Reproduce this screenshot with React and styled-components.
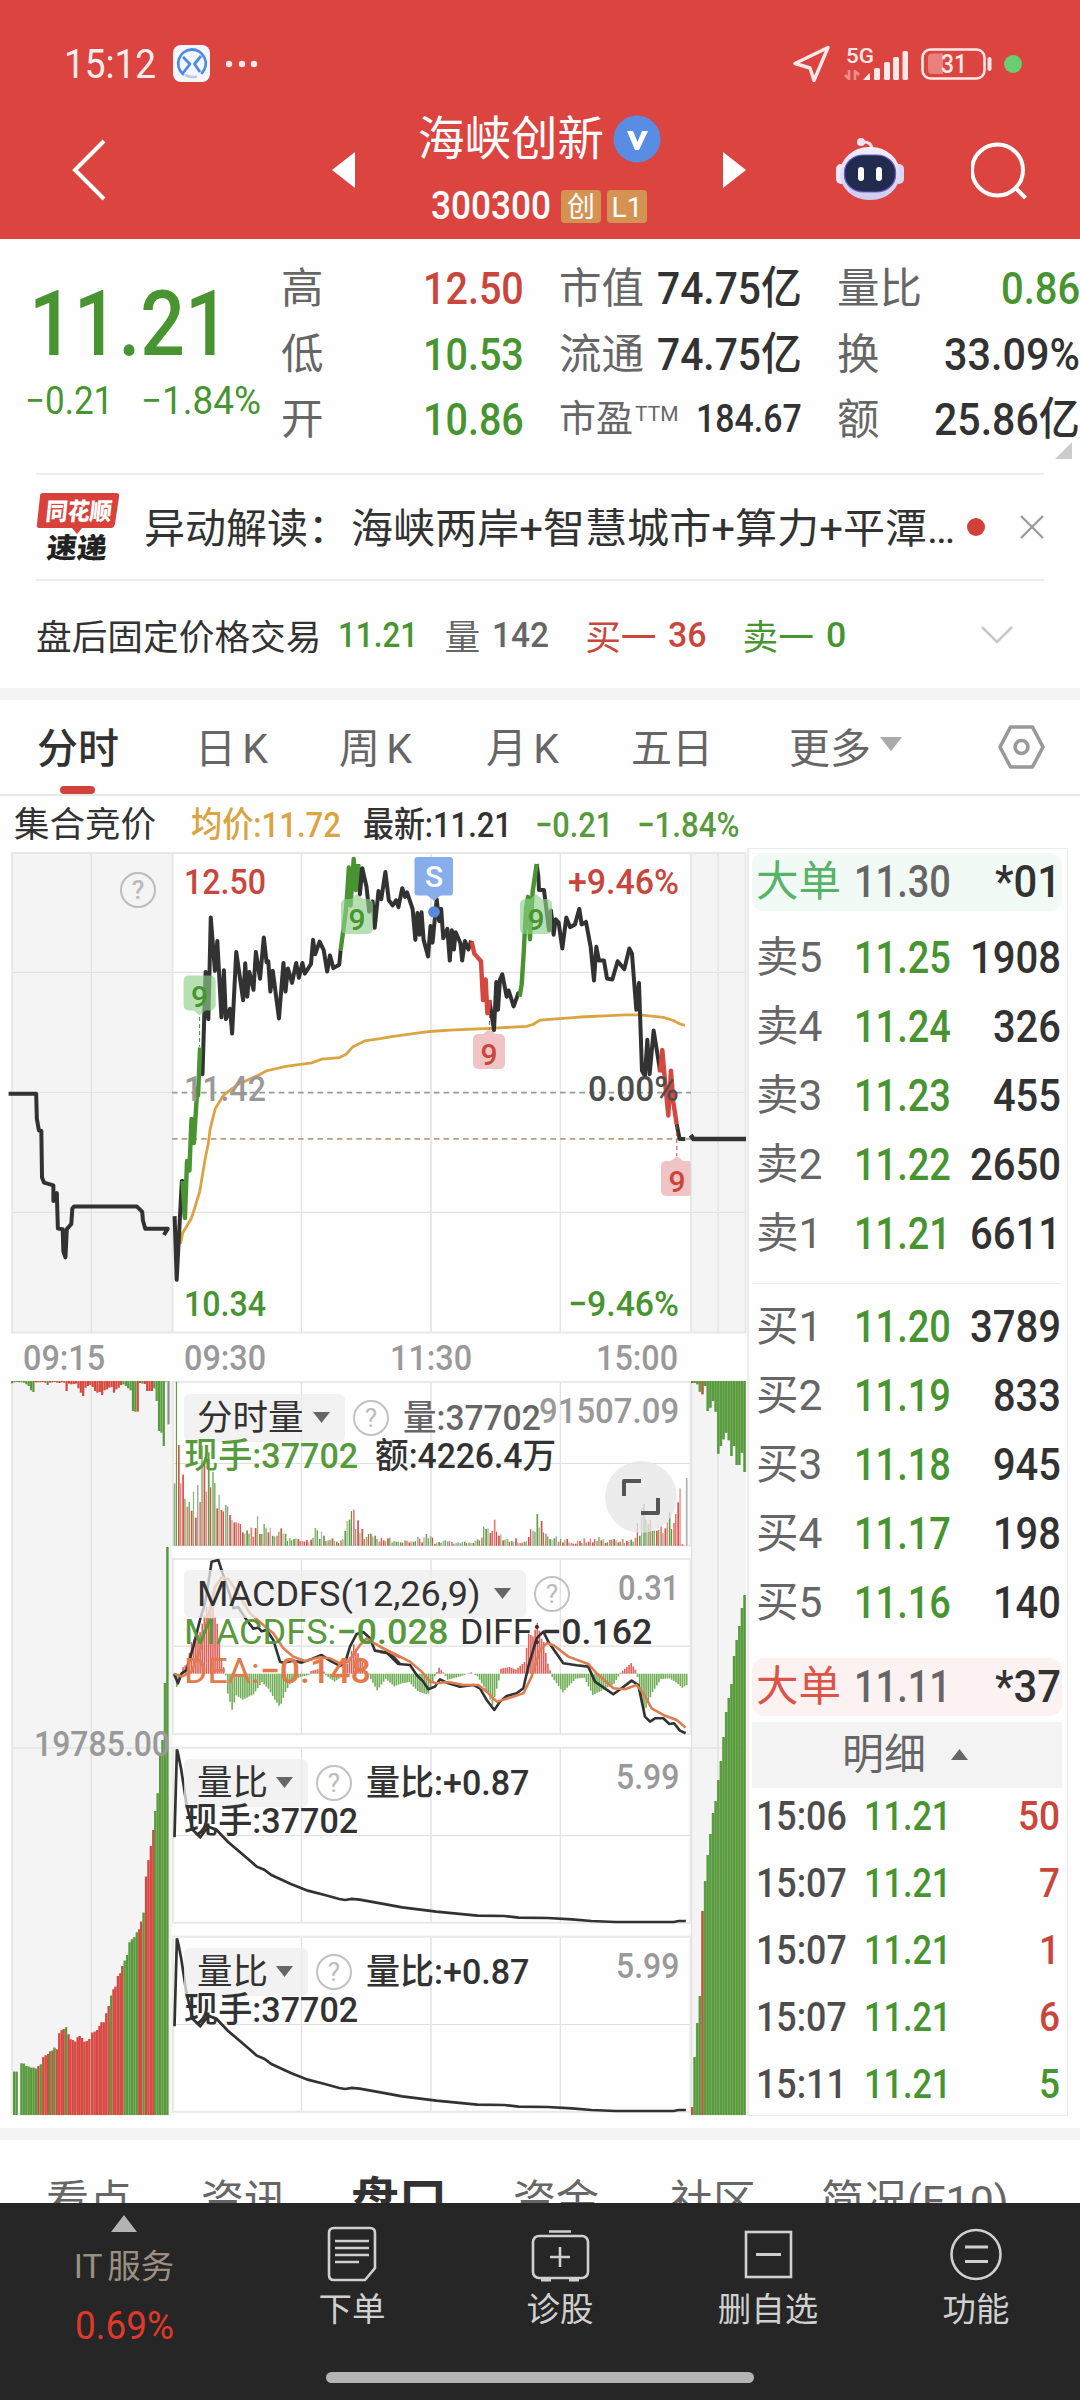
import React, { useLayoutEffect, useRef, useState } from 'react'
import styled, { createGlobalStyle } from 'styled-components'

const RED = '#c9463d'
const GREEN = '#479430'
const INK = '#323232'
const GREY = '#666'
const LIGHT = '#999'
const GOLD = '#d9a441'

// squeezes a figure into a fixed width, the way the condensed numerals are set
function Fit({ w, children, ...rest }) {
    const ref = useRef(null)
    const [scale, setScale] = useState(1)
    useLayoutEffect(() => {
        setScale(w / ref.current.offsetWidth)
    }, [w, children])
    return (
        <FitBox $w={w} {...rest}>
            <FitText ref={ref} style={{ transform: `scaleX(${scale})` }}>{children}</FitText>
        </FitBox>
    )
}

const tri = (dir) => dir === 'up' ? '0,10 8.5,0 17,10' : '0,0 17,0 8.5,10'

function Caret({ dir, color = GREY, size = 17, ...rest }) {
    return (
        <svg width={size} height={size * 0.65} viewBox="0 0 17 10" preserveAspectRatio="none" {...rest}>
            <polygon points={tri(dir)} fill={color} />
        </svg>
    )
}

function Help() {
    return <HelpCircle>?</HelpCircle>
}

/* ---------- data ---------- */

const asks = [['卖5', '11.25', '1908'], ['卖4', '11.24', '326'], ['卖3', '11.23', '455'], ['卖2', '11.22', '2650'], ['卖1', '11.21', '6611']]
const bids = [['买1', '11.20', '3789'], ['买2', '11.19', '833'], ['买3', '11.18', '945'], ['买4', '11.17', '198'], ['买5', '11.16', '140']]
const ticks = [['15:06', '50', RED], ['15:07', '7', RED], ['15:07', '1', RED], ['15:07', '6', RED], ['15:11', '5', GREEN]]

// [minute, value] pairs, filled in between
function fill(keys) {
    const out = []
    for (let k = 0; k < keys.length - 1; k++) {
        const [a, va] = keys[k]
        const [b, vb] = keys[k + 1]
        for (let i = a; i < b; i++) out.push(va + (vb - va) * (i - a) / (b - a))
    }
    out.push(keys[keys.length - 1][1])
    return out
}

const volHead = [187, 492, 302, 187, 213, 141, 117, 131, 105, 162, 84, 182, 131, 300, 250, 162, 280, 175, 221, 188, 112, 153, 107, 103, 122, 118, 92, 77, 70, 70, 68, 65, 40, 36, 46, 36, 54, 27, 53, 88, 35, 35, 65, 52, 40, 54, 30, 28, 30, 42, 52, 36, 36, 14, 22, 16, 20, 22, 20, 14, 14, 12, 17, 12, 18, 24, 53, 46, 20, 42, 30, 14, 16, 18, 22, 14, 12, 8, 16, 20, 44, 74, 78, 104, 108, 50, 76, 38, 50, 20, 26, 35, 36, 28, 30, 20, 12, 24, 16, 14, 22, 24, 10, 14, 12, 12]
const volMid = fill([[106, 10], [108, 16], [112, 12], [114, 27], [116, 14], [118, 35], [119, 32], [121, 24], [122, 8], [128, 18], [131, 8], [136, 12], [139, 8], [143, 22], [144, 24]])
    .map((v, i) => v * (i % 3 === 1 ? 0.7 : 1))
const volTail = [57, 50, 52, 38, 44, 78, 42, 30, 34, 16, 18, 20, 12, 14, 12, 22, 10, 8, 9, 12, 14, 26, 50, 45, 42, 95, 54, 74, 40, 36, 28, 20, 18, 22, 28, 12, 20, 10, 18, 20, 10, 8, 6, 6, 15, 14, 8, 22, 10, 12, 22, 10, 20, 14, 26, 16, 20, 9, 10, 18, 18, 20, 16, 10, 12, 20, 8, 14, 11, 18, 12, 24, 67, 30, 112, 125, 78, 65, 78, 44, 46, 45, 48, 58, 38, 52, 70, 100, 50, 68, 95, 130, 172, 4, 0, 203]
const volume = [...volHead, ...volMid, ...volTail]
const volTone = 'ggrrrgrgrgrxrgrrgrggrgrrgxrgrrr'

const macd = fill([[0, -8], [1, -40], [3, -10], [4, 20], [6, 30], [8, 95], [10, 110], [12, 125], [15, 200], [16, 180], [18, 235], [19, 170], [20, 150], [21, 90], [22, 45], [23, 20], [24, -5], [25, -60], [27, -108], [29, -65], [32, -78], [37, -62], [41, -25], [44, -45], [47, -78], [49, -96], [50, -90], [52, -55], [55, -20], [60, -8], [63, -4], [64, 8], [69, 17], [71, -5], [75, -24], [79, -6], [80, 10], [84, 88], [87, 48], [90, 8], [91, -5], [95, -50], [99, -15], [103, -38], [106, -30], [110, -25], [114, -52], [118, -62], [119, -60], [122, -8], [123, 5], [124, 18], [126, 4], [128, -18], [134, -8], [139, 4], [142, -8], [147, -60], [149, -95], [152, -20], [153, 15], [157, 20], [160, 12], [164, 35], [166, 120], [168, 112], [170, 152], [172, 105], [173, 95], [175, 30], [177, -10], [182, -56], [188, -15], [192, -12], [196, -64], [201, -48], [206, -30], [209, 3], [214, 32], [216, 12], [217, -10], [220, -118], [224, -55], [228, -16], [232, -14], [235, -26], [238, -42], [240, -34]])

const preTop = '7 4 3 4 4 5 10 15 28 33 4 4 4 3 5 12 5 4 3 5 6 4 5 30 8 10 9 8 22 35 45 20 15 12 18 30 35 33 42 28 25 20 18 35 25 20 12 10 15 22 28 90 92 92 6 8 9 30 30 30 22 60 150 155 195 2 130'.split(' ').map(Number)
const preTopTone = 'ggggggggggrrrrrgrrrgrrrrrrrrrrrrrrrrrrrrrrrrrrrggggggrrgrrrrgggggg'
const preBars = [[27, 1025, 'g'], [32, 1025, 'g'], [42, 1000, 'g'], [47, 1001, 'g'], [52, 1008, 'g'], [57, 1010, 'g'], [62, 1013, 'g'], [67, 1013, 'g'], [72, 1016, 'g'], [77, 1008, 'r'], [82, 1003, 'g'], [87, 982, 'r'], [92, 976, 'r'], [97, 972, 'r'], [101, 964, 'g'], [106, 962, 'r'], [110, 953, 'g'], [115, 958, 'r'], [120, 910, 'r'], [125, 901, 'r'], [129, 897, 'r'], [134, 892, 'g'], [139, 913, 'r'], [143, 928, 'r'], [148, 930, 'r'], [153, 935, 'r'], [158, 922, 'r'], [162, 918, 'r'], [167, 924, 'r'], [172, 935, 'r'], [177, 933, 'r'], [182, 927, 'r'], [188, 908, 'r'], [193, 905, 'r'], [198, 900, 'r'], [203, 888, 'r'], [207, 877, 'r'], [212, 877, 'r'], [217, 850, 'r'], [222, 828, 'r'], [227, 797, 'g'], [232, 778, 'r'], [236, 770, 'r'], [241, 738, 'r'], [246, 730, 'r'], [250, 708, 'r'], [255, 692, 'g'], [260, 675, 'g'], [265, 637, 'g'], [270, 628, 'g'], [275, 621, 'g'], [280, 607, 'g'], [285, 598, 'r'], [289, 575, 'r'], [294, 548, 'g'], [299, 440, 'r'], [304, 390, 'r'], [309, 348, 'r'], [314, 300, 'r'], [318, 243, 'g'], [323, 190, 'g'], [328, 75, 'g'], [333, 30, 'g'], [338, -141, 'g'], [343, -549, 'g']]
const postTop = [6, 6, 10, 32, 40, 15, 90, 80, 60, 92, 218, 195, 175, 155, 178, 225, 195, 252, 252, 215, 273]
const postBars = [2107, 2057, 2023, 1996, 1911, 1881, 1855, 1834, 1813, 1801, 1780, 1761, 1737, 1712, 1698, 1684, 1656, 1640, 1626, 1608, 1595]

const tone = (c) => c === 'g' ? '#579a3c' : c === 'r' ? '#d6473f' : '#909090'

/* ---------- charts ---------- */

// left and right halves of the trace are kept on their own grids
const L = 'translate(0 840) scale(.3444)'
const R = 'translate(380 840) scale(.3333 .3444)'

function Trace({ grid, points, color = INK, width = 4 }) {
    return (
        <g transform={grid}>
            <polyline points={points} fill="none" stroke={color} strokeWidth={width} strokeLinejoin="round" strokeLinecap="butt" vectorEffect="non-scaling-stroke" />
        </g>
    )
}

function Nine({ x, y, down, up }) {
    const fillColor = down ? '#e8a5a5' : '#8fcf8b'
    return (
        <g>
            <path d={up ? `M${x - 6} ${y}l6 -5 6 5z` : `M${x - 6} ${y + 35}l6 5 6 -5z`} fill={fillColor} opacity=".65" />
            <rect x={x - 16} y={y} width="32" height="35" rx="5" fill={fillColor} opacity=".65" />
            <ChartText x={x} y={y + 31} fontSize="30" textAnchor="middle" fill={down ? RED : GREEN}>9</ChartText>
        </g>
    )
}

function Label({ x, y, w, color, children, size = 35.5 }) {
    return <ChartText x={x} y={y} fontSize={size} fill={color} textLength={w} lengthAdjust="spacingAndGlyphs">{children}</ChartText>
}

function PriceChart() {
    return (
        <Plot width="747" height="486" viewBox="0 848 747 486">
            <rect x="12" y="852" width="161" height="481" fill="#f4f4f4" />
            <rect x="691" y="852" width="55" height="481" fill="#f4f4f4" />
            <g stroke="#e2e2e2" strokeWidth="1.2">
                <path d="M12 972.3H746M12 1092.5H173M691 1092.5H746M12 1212.3H746M91.3 853V1332M301.5 853V1332M560.3 853V1332" />
                <path d="M11 853H746M11 1332.5H746M12 853V1332M172.5 853V1332M431 853V1332M691 853V1332M718 853V1332M745.5 853V1332" stroke="#e8e8e8" strokeWidth="2" />
            </g>
            <path d="M172 1092.6H691" stroke="#999" strokeWidth="1.8" strokeDasharray="5.6 4.1" />
            <path d="M172 1138.8H691" stroke="#b8a078" strokeWidth="1.8" strokeDasharray="5.6 4.1" />

            <Trace grid={L} width={2.8} color={GOLD} points="520,1120 525,1170 530,1142 555,1100 565,1070 580,1020 595,930 605,880 610,840 625,780 650,740 690,710 750,683 775,670 830,657 905,647 935,636 985,632 1005,622 1025,600 1060,583 1103,577" />
            <Trace grid={R} width={2.8} color={GOLD} points="0,577 40,570 150,556 210,552 330,547 440,541 460,535 480,523 600,514 690,510 735,508 780,508 850,515 880,524 897,533 915,538" />

            <Trace grid={L} points="25,737 105,737 107,810 113,843 120,845 122,980 128,995 155,1003 155,1048 165,1025 168,1128 182,1130 184,1195 190,1212 194,1130 207,1115 210,1070 215,1064 397,1064 413,1080 415,1105 422,1129 487,1129 476,1147" />
            <Trace grid={L} points="507,1092 513,1277 528,990 530,990 537,1095" />
            <Trace grid={L} points="581,605 588,680 597,383 605,520 612,225 624,380 631,293 643,515 650,378 656,520 668,490 674,562 686,325 706,465 712,358 718,455 724,383 736,435 743,325 755,403 766,283 774,355 779,352 785,440 792,380 810,518 823,357 829,440 836,373 848,415 860,357 868,400 878,357 885,388 903,360 909,290 915,332 928,295 940,320 950,382 958,335 968,372 985,362 989,320" />
            <Trace grid={L} points="1040,70 1045,158 1052,82 1064,135 1072,208 1082,178 1088,255 1099,148 1107,172 1119,93 1129,175 1140,190 1150,175 1157,195 1168,140 1176,165 1182,152 1198,200 1206,290 1212,212 1218,275 1224,210 1230,290 1243,338 1250,250 1256,298 1268,172 1275,235 1281,200 1287,285 1299,258 1306,350 1312,262 1318,318 1323,268 1337,300 1342,350 1350,293 1360,318 1368,292" />
            <Trace grid={R} points="328,465 342,552 349,412 354,493 360,405 367,390 380,455 386,437 401,483 415,445 419,453" />
            <Trace grid={R} points="470,70 475,105 477,145 492,145 507,262 513,205 521,275 527,230 536,240 547,315 559,225 570,253 585,245 598,200 605,245 618,238 632,310 642,408 649,310 657,350 672,350 681,402 697,405 713,352 733,375 748,315 756,330 769,493 777,415 786,670 795,685 802,580 809,680 821,553 837,650 840,672" />
            <Trace grid={R} points="890,825 899,868 916,868" />
            <Trace grid={R} points="932,857 940,868 1098,868" width={4.6} />

            <Trace grid={L} color={GREEN} width={4.4} points="530,990 537,1098 543,932 550,960 556,810 563,880 573,720 575,742 581,603" />
            <Trace grid={L} color={GREEN} width={4.4} points="989,320 1005,200 1013,80 1018,190 1027,55 1033,145 1040,70" />
            <Trace grid={R} color={GREEN} width={4.4} points="419,455 425,420 431,330 438,200 444,165 450,288 458,150 470,70" />
            <Trace grid={R} color="#d6473f" width={4.4} points="275,295 283,330 303,352 309,465 317,405 322,503 330,465" />
            <Trace grid={R} color="#d6473f" width={4.4} points="840,675 847,610 857,720 865,800 873,670 880,760 890,825" />

            <path d="M199.6 1017V1047" stroke={GREEN} strokeDasharray="4 3" />
            <path d="M489.5 1014V1030M676.8 1125V1156" stroke={RED} strokeDasharray="4 3" />
            <Nine x={199.6} y={975.5} />
            <Nine x={357} y={899} up />
            <Nine x={536} y={899} up />
            <Nine x={489} y={1034} down up />
            <ClipRight><Nine x={677} y={1161} down up /></ClipRight>

            <rect x="414.5" y="857" width="38.5" height="38.5" rx="3" fill="#87aeeb" />
            <path d="M427 895l7 6 7 -6z" fill="#87aeeb" />
            <circle cx="434" cy="912" r="5.8" fill="#5a88da" />
            <ChartText x="434" y="887" fontSize="30" fill="#fff" textAnchor="middle">S</ChartText>

            <circle cx="138" cy="890" r="17" fill="none" stroke="#bbb" strokeWidth="2" />
            <ChartText x="138" y="899" fontSize="26" fill="#bbb" textAnchor="middle">?</ChartText>

            <Label x={184} y={894} w={82} color={RED}>12.50</Label>
            <Label x={184} y={1101} w={82} color={LIGHT}>11.42</Label>
            <Label x={184} y={1316} w={82} color={GREEN}>10.34</Label>
            <Label x={568} y={894} w={111} color={RED}>+9.46%</Label>
            <Label x={588} y={1101} w={91} color="#4d4d4d">0.00%</Label>
            <Label x={568} y={1316} w={111} color={GREEN}>−9.46%</Label>
        </Plot>
    )
}

function ClipRight({ children }) {
    return (
        <>
            <clipPath id="sessionEnd"><rect x="600" y="1100" width="90.5" height="120" /></clipPath>
            <g clipPath="url(#sessionEnd)">{children}</g>
        </>
    )
}

function PreColumn() {
    return (
        <Plot width="172" height="736" viewBox="0 1380 172 736">
            <rect x="12" y="1382" width="160" height="734" fill="#f4f4f4" />
            <path d="M12 1382V2115M91.3 1382V2115M12 1748H172" stroke="#e2e2e2" strokeWidth="1.4" />
            {preTop.map((h, i) => (
                <rect key={i} x={11 + i * 2.37} y="1381" width="2.2" height={h / 3} fill={tone(preTopTone[i])} />
            ))}
            {preBars.map(([x, y, c]) => (
                <rect key={x} x={x / 2.063} y={1730 + y / 3} width="2.1" height={385 - y / 3} fill={tone(c)} />
            ))}
            <g opacity=".5">
                {preBars.map(([x, y, c]) => (
                    <rect key={x} x={x / 2.063} y={1730 + y / 3} width="2.5" height={385 - y / 3} fill={tone(c)} />
                ))}
            </g>
            <Label x={34} y={1755.5} w={136} color={LIGHT}>19785.00</Label>
        </Plot>
    )
}

function PostColumn() {
    return (
        <Plot width="56" height="736" viewBox="691 1380 56 736">
            <rect x="691" y="1382" width="55" height="734" fill="#f4f4f4" />
            <path d="M691.5 1382V2115M718 1382V2115M691 1748H746" stroke="#e2e2e2" strokeWidth="1.4" />
            <g opacity=".72">
                <path d={postTop.map((h, i) => `M${692 + i * 2.63} 1381v${h / 3}`).join('')} stroke={tone('g')} strokeWidth="2.7" />
                <path d={postBars.map((y, i) => `M${692 + i * 2.63} 2115V${y}`).join('')} stroke={tone('g')} strokeWidth="2.7" />
            </g>
            {postTop.map((h, i) => (
                <rect key={i} x={691 + i * 2.63} y="1381" width="1.9" height={h / 3} fill={tone(i === 0 || i === 4 ? 'r' : 'g')} />
            ))}
            {postBars.map((y, i) => (
                <rect key={i} x={691 + i * 2.63} y={y} width="1.9" height={2115 - y} fill={tone(i === 0 || i === 4 ? 'r' : 'g')} />
            ))}
        </Plot>
    )
}

function Grid({ top, mid, bottom }) {
    return (
        <>
            <path d={`M172 ${mid}H691M301.5 ${top}V${bottom}M560.3 ${top}V${bottom}`} stroke="#e0e0e0" strokeWidth="1.2" />
            <path d={`M172 ${top}H691M172 ${bottom}H691M173 ${top}V${bottom}M431 ${top}V${bottom}M690.5 ${top}V${bottom}`} stroke="#e9e9e9" strokeWidth="2" />
        </>
    )
}

function VolumePanel() {
    return (
        <Panel $h={173}>
            <Plot width="519" height="173" viewBox="172 1380 519 173">
                <Grid top={1382} mid={1463.5} bottom={1545.5} />
                {volume.map((h, i) => {
                    const c = i < volTone.length ? volTone[i] : i === volume.length - 1 ? 'x' : 'rgrgggrrgxrg'[(i * 7 + Math.round(h)) % 12]
                    return <rect key={i} x={173.7 + i * 2.134} y={1545.7 - h / 3} width={i % 2 ? 1.2 : 1.7} height={h / 3} fill={tone(c)} opacity={i % 3 ? 0.95 : 0.7} />
                })}
            </Plot>
            <Legend $top={14}>
                <Tag $w={161}>分时量<Caret /></Tag>
                <Help />
                <Fit w={138}>量:37702</Fit>
            </Legend>
            <Scale $top={13}><Fit w={140}>91507.09</Fit></Scale>
            <Values $top={57}>
                <Tone $c="#579a3c"><Fit w={174}>现手:37702</Fit></Tone>
                <Tone><Fit w={181}>额:4226.4万</Fit></Tone>
            </Values>
            <Expand>
                <svg width="38" height="38" viewBox="0 0 38 38" fill="none" stroke="#555" strokeWidth="4">
                    <path d="M2 18V3H19M36 20V35H19" strokeLinejoin="round" />
                </svg>
            </Expand>
        </Panel>
    )
}

function MacdPanel() {
    const L5 = 'translate(0 1360) scale(.3333)'
    const R5 = 'translate(380 1360) scale(.3333)'
    return (
        <Panel $h={189}>
            <Plot width="519" height="189" viewBox="172 1553 519 189">
                <Grid top={1559} mid={1646.2} bottom={1734} />
                {macd.map((h, i) => (
                    <rect key={i} x={173.7 + i * 2.134} y={h > 0 ? 1673.7 - h / 3 : 1673.7} width="1.6" height={Math.abs(h) / 3} fill={h > 0 ? '#df5f5b' : '#70ad57'} />
                ))}
                <Trace grid={L5} width={2.6} points="522,941 534,970 545,940 560,930 580,860 600,780 615,730 625,670 635,605 655,600 668,640 690,705 700,745 715,742 740,780 760,806 775,803 785,814 800,810 820,840 840,905 850,908 880,902 905,908 935,897 965,885 990,902 1020,918 1035,910 1050,860 1070,822 1090,816 1110,835 1125,872 1160,878 1180,890 1200,912" />
                <Trace grid={R5} width={2.6} points="0,876 20,878 55,912 90,915 110,945 130,965 145,988 165,980 180,958 205,970 240,980 280,975 300,985 320,1020 343,1050 360,1025 380,1008 410,1000 430,985 445,920 470,835 490,815 505,845 550,910 590,916 625,920 645,965 700,1003 725,985 755,962 775,975 795,1070 810,1085 825,1075 850,1075 868,1092 882,1090 900,1112 917,1120" />
                <Trace grid={L5} width={2.6} color="#dd7d52" points="522,941 545,950 575,935 600,870 625,770 645,680 665,652 685,658 710,695 750,760 790,795 820,820 850,865 880,890 915,903 960,892 990,895 1020,910 1045,905 1080,855 1100,835 1120,848 1150,865 1200,893" />
                <Trace grid={R5} width={2.6} color="#dd7d52" points="0,860 50,885 90,905 125,935 150,965 170,970 205,966 250,975 295,975 320,995 350,1025 385,1015 430,1000 455,950 480,870 500,850 520,855 565,890 625,912 650,940 700,985 735,988 770,975 790,1000 815,1045 850,1065 890,1080 917,1103" />
            </Plot>
            <Legend $top={17}>
                <Tag $w={342}><Fit w={284}>MACDFS(12,26,9)</Fit><Caret /></Tag>
                <Help />
            </Legend>
            <Scale $top={17}><Fit w={61}>0.31</Fit></Scale>
            <Values $top={60}>
                <Tone $c="#579a3c"><Fit w={265}><Thin>MACDFS:</Thin>−0.028</Fit></Tone>
                <Tone $gap={-6}><Fit w={192}><Thin>DIFF:</Thin>−0.162</Fit></Tone>
            </Values>
            <Values $top={99}>
                <Tone $c="#e37a4c"><Fit w={187}><Thin>DEA:</Thin>−0.148</Fit></Tone>
            </Values>
        </Panel>
    )
}

function RatioPanel({ height }) {
    return (
        <Panel $h={height}>
            <Plot width="519" height={height} viewBox={`172 1742 519 ${height}`}>
                <Grid top={1747.7} mid={1835.5} bottom={1922.8} />
                <g transform="translate(0 1730) scale(.4847 .3333)">
                    <polyline points="360,322 365,58 368,75 374,120 385,225 398,300 413,322 430,290 447,300 470,335 510,385 530,410 545,419 560,435 600,462 635,482 670,495 700,507 712,510 726,507 742,509 785,520 830,532 900,545 985,557 1040,558 1070,563 1130,564 1180,568 1220,573 1270,576 1390,576 1400,573 1415,573" fill="none" stroke={INK} strokeWidth="2.7" vectorEffect="non-scaling-stroke" />
                </g>
            </Plot>
            <Legend $top={17}>
                <Tag $w={124}>量比<Caret /></Tag>
                <Help />
                <Tone><Fit w={163}>量比:+0.87</Fit></Tone>
            </Legend>
            <Scale $top={17}><Fit w={63}>5.99</Fit></Scale>
            <Values $top={60}>
                <Tone><Fit w={174}>现手:37702</Fit></Tone>
            </Values>
        </Panel>
    )
}

/* ---------- header ---------- */

function StatusBar() {
    return (
        <StatusRow>
            <Clock><Fit w={92}>15:12</Fit></Clock>
            <svg width="38" height="38" viewBox="0 0 38 38">
                <rect width="37" height="37" rx="8" fill="#f4f7fd" />
                <path d="M10 29A14 14 0 0 1 18.500 4.500A14 14 0 0 1 29 28" fill="none" stroke="#4f8be6" strokeWidth="2.8" strokeLinecap="round" />
                <path d="M12 30Q18 33 24 31.500" fill="none" stroke="#b9cbe8" strokeWidth="2.6" />
                <path d="M10 12L17 19L10 28M28 11L21.500 19L27 27" fill="none" stroke="#4f8be6" strokeWidth="2.8" strokeLinejoin="round" />
            </svg>
            <svg width="34" height="8" viewBox="0 0 34 8" fill="#fde9e8">
                <circle cx="4" cy="4" r="3.2" /><circle cx="17" cy="4" r="3.2" /><circle cx="29" cy="4" r="3.2" />
            </svg>
            <StatusRight>
                <svg width="40" height="40" viewBox="0 0 40 40" fill="none" stroke="#fde9e8" strokeWidth="3.4" strokeLinejoin="round">
                    <path d="M35 3.500L2 19.500L17 24L21 36.500z" />
                </svg>
                <svg width="66" height="36" viewBox="0 0 66 36">
                    <Status5G x="2" y="17" fontSize="21" textLength="28" lengthAdjust="spacingAndGlyphs">5G</Status5G>
                    <path d="M5 34V24M1 29L5 33M11 34V24M11 25L15 29" stroke="#ec8f8c" strokeWidth="2.6" fill="none" />
                    <g fill="#fde9e8">
                        <path d="M19 34L25 27.500Q26 27 26 28V34z" /><rect x="30" y="22" width="6" height="12" rx="1.5" />
                        <rect x="40" y="16" width="6" height="18" rx="1.5" /><rect x="49" y="11" width="6" height="23" rx="1.5" />
                        <rect x="58.500" y="5" width="5.5" height="29" rx="1.5" />
                    </g>
                </svg>
                <svg width="72" height="34" viewBox="0 0 72 34">
                    <rect x="1.5" y="2.5" width="62" height="29" rx="8" fill="none" stroke="#fde9e8" strokeWidth="2.6" />
                    <path d="M11 6.500H22V27H11a4 4 0 0 1-4-4V10.500a4 4 0 0 1 4-4z" fill="#e9807c" />
                    <path d="M68.500 12V22" stroke="#fde9e8" strokeWidth="4" strokeLinecap="round" fill="none" />
                    <Status5G x="20" y="26" fontSize="25" textLength="26" lengthAdjust="spacingAndGlyphs">31</Status5G>
                </svg>
                <GreenDot />
            </StatusRight>
        </StatusRow>
    )
}

function Robot() {
    return (
        <svg width="72" height="66" viewBox="0 0 72 66">
            <defs>
                <linearGradient id="helmet" x1="0" y1="0" x2="0" y2="1">
                    <stop offset="0" stopColor="#f3eefc" /><stop offset="1" stopColor="#cdcbf1" />
                </linearGradient>
            </defs>
            <path d="M28 5Q38 4 38 13" fill="none" stroke="#f3dfe9" strokeWidth="3" />
            <circle cx="27" cy="5" r="4" fill="#efe3f5" />
            <rect x="2" y="27" width="10" height="20" rx="5" fill="#eeebfb" />
            <rect x="60" y="27" width="10" height="20" rx="5" fill="#dcd5f5" />
            <rect x="6" y="10" width="60" height="53" rx="29" ry="27" fill="url(#helmet)" />
            <rect x="10.5" y="18" width="51" height="37" rx="19" ry="17" fill="#202b4e" stroke="#6a5bc0" strokeWidth="1.2" />
            <rect x="24" y="30" width="6" height="14" rx="3" fill="#fff" />
            <rect x="42" y="30" width="6" height="14" rx="3" fill="#fff" />
        </svg>
    )
}

function TitleBar() {
    return (
        <TitleRow>
            <BackSlot>
                <svg width="36" height="64" viewBox="0 0 36 64" fill="none" stroke="#fff" strokeWidth="4"><path d="M33 3L4 32L33 61" /></svg>
            </BackSlot>
            <svg width="24" height="36" viewBox="0 0 24 36"><path d="M0 18L23 0V36z" fill="#fff" /></svg>
            <TitleBox>
                <Name>
                    海峡创新
                    <svg width="48" height="48" viewBox="0 0 48 48">
                        <circle cx="24" cy="24" r="23.5" fill="#588de3" />
                        <path d="M14 16L22 35H26L35 16H29L24.5 27L20 16z" fill="#fff" />
                    </svg>
                </Name>
                <Code><Fit w={120}>300300</Fit><Mark>创</Mark><Mark>L1</Mark></Code>
            </TitleBox>
            <svg width="24" height="36" viewBox="0 0 24 36"><path d="M24 18L1 0V36z" fill="#fff" /></svg>
            <RobotSlot><Robot /></RobotSlot>
            <svg width="60" height="62" viewBox="0 0 60 62" fill="none" stroke="#fff" strokeWidth="4">
                <circle cx="26.5" cy="31" r="25.5" /><path d="M44.5 49L54.5 59" />
            </svg>
        </TitleRow>
    )
}

function Quote() {
    return (
        <QuoteRow>
            <PriceBox>
                <BigPrice><Fit w={201}>11.21</Fit></BigPrice>
                <Change><Fit w={88}>−0.21</Fit><Fit w={120}>−1.84%</Fit></Change>
            </PriceBox>
            <StatCol $w={243} $ml={0}>
                <Stat>高<Tone $c={RED}><Fit w={101}>12.50</Fit></Tone></Stat>
                <Stat>低<Tone $c={GREEN}><Fit w={101}>10.53</Fit></Tone></Stat>
                <Stat>开<Tone $c={GREEN}><Fit w={101}>10.86</Fit></Tone></Stat>
            </StatCol>
            <StatCol $w={243} $ml={35}>
                <Stat>市值<Tone><Fit w={145}>74.75亿</Fit></Tone></Stat>
                <Stat>流通<Tone><Fit w={145}>74.75亿</Fit></Tone></Stat>
                <Stat $small><span>市盈<Sup>TTM</Sup></span><Tone><Fit w={106}>184.67</Fit></Tone></Stat>
            </StatCol>
            <StatCol $w={243} $ml={35}>
                <Stat>量比<Tone $c={GREEN}><Fit w={79}>0.86</Fit></Tone></Stat>
                <Stat>换<Tone><Fit w={136}>33.09%</Fit></Tone></Stat>
                <Stat>额<Tone><Fit w={146}>25.86亿</Fit></Tone></Stat>
            </StatCol>
            <Corner />
        </QuoteRow>
    )
}

function Logo() {
    return (
        <svg width="86" height="72" viewBox="0 0 86 72">
            <path d="M7 2H80Q84 2 83 6L79 33Q78 37 75 37H46L41 43L36 37H4Q0 37 1 33L4 5Q4 2 7 2z" fill="#d8423a" />
            <g transform="skewX(-6)">
                <LogoText x="12" y="29" fontSize="24" textLength="66" lengthAdjust="spacingAndGlyphs" fill="#fff">同花顺</LogoText>
                <LogoText x="17" y="67" fontSize="28" textLength="60" lengthAdjust="spacingAndGlyphs" fill="#222">速递</LogoText>
            </g>
        </svg>
    )
}

/* ---------- page ---------- */

function OrderBook() {
    return (
        <Book>
            <BigOrder $bg="#f2faf5"><BookName $c="#57b368">大单</BookName><BookPrice $c={GREY}><Fit w={97}>11.30</Fit></BookPrice><Fit w={66}>*01</Fit></BigOrder>
            <BookGroup>
                {asks.map(([n, p, v]) => <Level key={n} name={n} price={p} vol={v} />)}
            </BookGroup>
            <Rule />
            <BookGroup $bids>
                {bids.map(([n, p, v]) => <Level key={n} name={n} price={p} vol={v} />)}
            </BookGroup>
            <BigOrder $bg="#fdf2f2"><BookName $c="#dc5448">大单</BookName><BookPrice $c={GREY}><Fit w={97}>11.11</Fit></BookPrice><Fit w={66}>*37</Fit></BigOrder>
            <DetailHead>明细<Caret dir="up" /></DetailHead>
            {ticks.map(([t, v, c], i) => (
                <Tick key={i}>
                    <Tone $c="#4d4d4d"><Fit w={91}>{t}</Fit></Tone>
                    <TickPrice><Fit w={87}>11.21</Fit></TickPrice>
                    <Tone $c={c}><Fit w={v.length * 21}>{v}</Fit></Tone>
                </Tick>
            ))}
        </Book>
    )
}

function Level({ name, price, vol }) {
    return (
        <LevelRow>
            <BookName>{name}</BookName>
            <BookPrice><Fit w={97}>{price}</Fit></BookPrice>
            <Fit w={vol.length * 22.7}>{vol}</Fit>
        </LevelRow>
    )
}

function App() {
    return (
        <Page>
            <Global />
            <Header>
                <StatusBar />
                <TitleBar />
            </Header>
            <Quote />
            <News>
                <Logo />
                <NewsText>异动解读：<Fit w={604}>海峡两岸+智慧城市+算力+平潭…</Fit></NewsText>
                <RedDot />
                <svg width="24" height="24" viewBox="0 0 24 24" stroke="#999" strokeWidth="2.2"><path d="M1 1L23 23M23 1L1 23" /></svg>
            </News>
            <After>
                盘后固定价格交易
                <AfterItem $c={GREEN} $ml={16}><Fit w={80}>11.21</Fit></AfterItem>
                <AfterItem $c={GREY} $ml={27}>量</AfterItem>
                <AfterItem $c={GREY} $ml={12}><Fit w={57}>142</Fit></AfterItem>
                <AfterItem $c={RED} $ml={36}>买一</AfterItem>
                <AfterItem $c={RED} $ml={11}><Fit w={39}>36</Fit></AfterItem>
                <AfterItem $c={GREEN} $ml={36}>卖一</AfterItem>
                <AfterItem $c={GREEN} $ml={12}><Fit w={20}>0</Fit></AfterItem>
                <AfterArrow width="34" height="20" viewBox="0 0 34 20"><path d="M2 2L17 17L32 2" fill="none" stroke="#c8c8c8" strokeWidth="2.6" /></AfterArrow>
            </After>
            <Band />
            <Tabs>
                <Tab $on $w={158}>分时</Tab>
                <Tab $w={144}>日 K</Tab>
                <Tab $w={147}>周 K</Tab>
                <Tab $w={145}>月 K</Tab>
                <Tab $w={158}>五日</Tab>
                <Tab $w={209}>更多<Caret color="#aaa" size={22} /></Tab>
                <svg width="47" height="46" viewBox="0 0 47 46" fill="none" stroke="#999" strokeWidth="3.6" strokeLinejoin="round">
                    <path d="M12.5 3H34.5L45 23L34.5 43H12.5L2 23z" /><circle cx="23.5" cy="23" r="6.5" />
                </svg>
            </Tabs>
            <Info>
                <AfterItem $c={INK} $ml={0}>集合竞价</AfterItem>
                <AfterItem $c={GOLD} $ml={35}><Fit w={150}>均价:11.72</Fit></AfterItem>
                <AfterItem $c={INK} $ml={22}><Fit w={149}>最新:11.21</Fit></AfterItem>
                <AfterItem $c="#579a3c" $ml={23}><Fit w={78}>−0.21</Fit></AfterItem>
                <AfterItem $c="#579a3c" $ml={24}><Fit w={103}>−1.84%</Fit></AfterItem>
            </Info>
            <Main>
                <ChartColumn>
                    <PriceChart />
                    <Axis>
                        <Fit w={82}>09:15</Fit><Fit w={82}>09:30</Fit><Fit w={82}>11:30</Fit><Fit w={82}>15:00</Fit>
                    </Axis>
                    <Lower>
                        <PreColumn />
                        <Stack>
                            <VolumePanel />
                            <MacdPanel />
                            <RatioPanel height={189} />
                            <RatioPanel height={185} />
                        </Stack>
                        <PostColumn />
                    </Lower>
                </ChartColumn>
                <OrderBook />
            </Main>
            <Band />
            <Sections>
                <Section $w={155}>看点</Section>
                <Section $w={150}>资讯</Section>
                <Section $w={162} $on>盘口</Section>
                <Section $w={157}>资金</Section>
                <Section $w={151}>社区</Section>
                <Section>简况<Fit w={102}>(F10)</Fit></Section>
            </Sections>
            <Dock>
                <Sector>
                    <Caret dir="up" color="#b3b3b3" size={26} />
                    <SectorName>IT 服务</SectorName>
                    <SectorPct><Fit w={99}>0.69%</Fit></SectorPct>
                </Sector>
                <Action>
                    <svg width="60" height="60" viewBox="0 0 60 60" fill="none" stroke="#d0d0d0" strokeWidth="2.6">
                        <path d="M12 4H48Q53 4 53 9V44L43 56H12Q7 56 7 51V9Q7 4 12 4zM13 17H47M13 24H47M13 31H47M13 38H37" />
                    </svg>
                    下单
                </Action>
                <Action>
                    <svg width="60" height="60" viewBox="0 0 60 60" fill="none" stroke="#d0d0d0" strokeWidth="2.6">
                        <rect x="3" y="12" width="55" height="42" rx="6" /><path d="M19 7.5H41M30 23V43M20 33H40" />
                        <path d="M11 56H21M39 56H49" strokeWidth="3" />
                    </svg>
                    诊股
                </Action>
                <Action>
                    <svg width="60" height="60" viewBox="0 0 60 60" fill="none" stroke="#d0d0d0" strokeWidth="2.6">
                        <rect x="8" y="8" width="45" height="45" /><path d="M18 30.5H43" strokeWidth="3" />
                    </svg>
                    删自选
                </Action>
                <Action>
                    <svg width="60" height="60" viewBox="0 0 60 60" fill="none" stroke="#d0d0d0" strokeWidth="2.6">
                        <circle cx="30" cy="30.5" r="24.5" /><path d="M19 23H42M19 37.5H42" strokeWidth="3" />
                    </svg>
                    功能
                </Action>
                <HomeBar />
            </Dock>
        </Page>
    )
}

const Global = createGlobalStyle`
    body {
        margin: 0;
        background: #fff;
    }
    svg {
        display: block;
        flex: none;
    }
`

const Page = styled.div`
    width: 1080px;
    height: 2400px;
    display: flex;
    flex-direction: column;
    overflow: hidden;
    background: #fefefe;
    color: ${INK};
    font-family: Roboto, "Noto Sans CJK SC", sans-serif;
    white-space: nowrap;
`

const FitBox = styled.div`
    width: ${p => p.$w}px;
    flex: none;
    display: inline-block;
`

const FitText = styled.span`
    display: inline-block;
    transform-origin: 0 50%;
    white-space: nowrap;
`

const Tone = styled.div`
    color: ${p => p.$c || INK};
    margin-left: ${p => p.$gap || 0}px;
`

const Thin = styled.span`
    font-weight: 400;
`

const ChartText = styled.text`
    font-family: Roboto, "Noto Sans CJK SC", sans-serif;
    font-weight: 500;
`

const Status5G = styled.text`
    font-family: Roboto, sans-serif;
    font-weight: 500;
    fill: #fde9e8;
`

const LogoText = styled.text`
    font-family: "Noto Sans CJK SC", sans-serif;
    font-weight: 900;
`

const Plot = styled.svg`
    display: block;
`

const Header = styled.header`
    height: 239px;
    background: #dc4440;
    color: #fff;
    flex: none;
`

const StatusRow = styled.div`
    display: flex;
    align-items: center;
    height: 100px;
    padding: 28px 58px 0 64px;
    box-sizing: border-box;
`

const Clock = styled.div`
    font-size: 41px;
    color: #fdeeed;
    margin-right: 17px;

    & + svg {
        margin-right: 14px;
    }
`

const StatusRight = styled.div`
    margin-left: auto;
    display: flex;
    align-items: center;
    gap: 11px;
`

const GreenDot = styled.span`
    width: 18px;
    height: 18px;
    border-radius: 50%;
    background: #6ace70;
`

const TitleRow = styled.div`
    display: flex;
    align-items: center;
    height: 139px;
    padding-left: 71px;
`

const BackSlot = styled.div`
    width: 261px;
`

const TitleBox = styled.div`
    width: 366px;
    display: flex;
    flex-direction: column;
    align-items: center;
`

const Name = styled.div`
    display: flex;
    align-items: center;
    gap: 9px;
    height: 62px;
    line-height: 62px;
    font-size: 46.5px;
    margin-top: 3px;
    padding-left: 1px;
`

const Code = styled.div`
    display: flex;
    align-items: center;
    gap: 6px;
    height: 64px;
    line-height: 64px;
    font-size: 39px;
    font-weight: 500;
    margin: 4px 0 -4px;
`

const Mark = styled.span`
    min-width: 40px;
    height: 33px;
    line-height: 35px;
    border-radius: 4px;
    background: #d49353;
    font-size: 28px;
    font-weight: 400;
    text-align: center;
    margin-left: ${p => p.children === '创' ? 4 : 0}px;
`

const RobotSlot = styled.div`
    margin: 0 65px 0 88px;
`

const QuoteRow = styled.section`
    position: relative;
    display: flex;
    height: 234px;
    padding-top: 17px;
    box-sizing: border-box;
    flex: none;
`

const PriceBox = styled.div`
    width: 281px;
    color: ${GREEN};
`

const BigPrice = styled.div`
    padding-left: 29px;
    font-size: 90px;
    font-weight: 500;
    line-height: 110px;
    height: 110px;
    margin-top: 14px;
`

const Change = styled.div`
    display: flex;
    gap: 28px;
    padding-left: 25px;
    font-size: 39px;
    line-height: 42px;
`

const StatCol = styled.div`
    width: ${p => p.$w}px;
    margin-left: ${p => p.$ml}px;
`

const Stat = styled.div`
    display: flex;
    justify-content: space-between;
    height: 65.5px;
    line-height: 65.5px;
    font-size: ${p => p.$small ? 37 : 42.5}px;
    color: ${GREY};

    ${Tone} {
        font-size: ${p => p.$small ? 39 : 45}px;
        font-weight: 500;
    }
`

const Sup = styled.sup`
    font-size: 21px;
    vertical-align: 11px;
    line-height: 0;
    margin-left: 2px;
`

const Corner = styled.i`
    position: absolute;
    right: 8px;
    bottom: 14px;
    border-left: 17px solid transparent;
    border-bottom: 17px solid #ccc;
`

const News = styled.section`
    display: flex;
    align-items: center;
    height: 108px;
    margin: 0 36px;
    border-top: 2px solid #ececec;
    border-bottom: 2px solid #ececec;
    box-sizing: border-box;
    flex: none;
`

const NewsText = styled.div`
    display: flex;
    margin-left: 22px;
    padding-bottom: 5px;
    font-size: 41px;
    width: 824px;

    & > div {
        margin-left: 2px;
    }
`

const RedDot = styled.span`
    width: 18px;
    height: 18px;
    border-radius: 50%;
    background: #cf4138;
    margin-right: 35px;
    flex: none;
`

const After = styled.section`
    display: flex;
    align-items: center;
    height: 107px;
    padding-left: 36px;
    font-size: 35.7px;
    flex: none;
`

const AfterItem = styled.div`
    color: ${p => p.$c};
    margin-left: ${p => p.$ml}px;

    ${FitText} {
        font-weight: 500;
    }
`

const AfterArrow = styled.svg`
    margin-left: auto;
    margin-right: 66px;
`

const Band = styled.div`
    height: 12px;
    background: #f4f4f4;
    flex: none;
`

const Tabs = styled.nav`
    display: flex;
    align-items: center;
    height: 96px;
    padding-left: 37px;
    border-bottom: 2px solid #e6e6e6;
    box-sizing: border-box;
    flex: none;
`

const Tab = styled.div`
    width: ${p => p.$w}px;
    display: flex;
    align-items: center;
    gap: 9px;
    height: 94px;
    padding-bottom: 5px;
    box-sizing: border-box;
    font-size: 41px;
    word-spacing: -4px;
    color: ${p => p.$on ? INK : GREY};
    font-weight: ${p => p.$on ? 500 : 400};
    position: relative;

    &::after {
        content: '';
        display: ${p => p.$on ? 'block' : 'none'};
        position: absolute;
        left: 23px;
        bottom: 0;
        width: 35px;
        height: 8px;
        border-radius: 4px;
        background: #d0423a;
    }
`

const Info = styled.div`
    display: flex;
    align-items: center;
    height: 52px;
    padding: 7px 0 0 14px;
    box-sizing: border-box;
    font-size: 35.5px;
    line-height: 45px;
    flex: none;
`

const Main = styled.main`
    display: flex;
    height: 1280px;
    flex: none;
`

const ChartColumn = styled.div`
    width: 747px;
`

const Axis = styled.div`
    display: flex;
    height: 46px;
    line-height: 48px;
    font-size: 35.5px;
    font-weight: 500;
    color: ${LIGHT};
    padding-left: 23px;

    & > :nth-child(2) {
        margin-left: 79px;
    }
    & > :nth-child(3) {
        margin-left: 124px;
    }
    & > :nth-child(4) {
        margin-left: 124px;
    }
`

const Lower = styled.div`
    display: flex;
`

const Stack = styled.div`
    width: 519px;
`

const Panel = styled.div`
    position: relative;
    height: ${p => p.$h}px;
    font-size: 35.5px;
    font-weight: 500;
`

const Legend = styled.div`
    position: absolute;
    left: 12px;
    top: ${p => p.$top}px;
    height: 48px;
    line-height: 48px;
    display: flex;
    align-items: center;
    color: ${GREY};
    font-size: 35.5px;
`

const Tag = styled.div`
    width: ${p => p.$w}px;
    height: 48px;
    padding: 0 15px 0 13px;
    box-sizing: border-box;
    display: flex;
    align-items: center;
    justify-content: space-between;
    border-radius: 6px;
    background: rgba(238, 238, 238, 0.75);
    color: ${INK};
    font-weight: 400;
`

const HelpCircle = styled.span`
    width: 32px;
    height: 32px;
    line-height: 32px;
    border: 2px solid #c2c2c2;
    border-radius: 50%;
    margin: 0 14px 0 8px;
    text-align: center;
    font-size: 26px;
    font-weight: 400;
    color: #bbb;
`

const Scale = styled.div`
    position: absolute;
    right: 12px;
    top: ${p => p.$top}px;
    line-height: 36px;
    color: ${LIGHT};
`

const Values = styled.div`
    position: absolute;
    left: 12px;
    top: ${p => p.$top}px;
    display: flex;
    gap: 17px;
    line-height: 38px;
`

const Expand = styled.div`
    position: absolute;
    left: 433px;
    top: 81px;
    width: 72px;
    height: 72px;
    border-radius: 50%;
    background: rgba(230, 230, 230, 0.75);
    display: flex;
    align-items: center;
    justify-content: center;
`

const Book = styled.aside`
    width: 321px;
    height: 1268px;
    box-sizing: border-box;
    border: 1px solid #ebebeb;
    border-left-width: 2px;
    padding: 4px 5px 0 3px;
    font-size: 45px;
    font-weight: 500;
`

const BigOrder = styled.div`
    display: flex;
    align-items: center;
    height: 58px;
    line-height: 58px;
    padding: 0 1px 0 4px;
    border-radius: 12px;
    background: ${p => p.$bg};
`

const BookGroup = styled.div`
    padding-top: ${p => p.$bids ? 8 : 12}px;
    height: ${p => p.$bids ? 374 : 372}px;
    box-sizing: border-box;
`

const LevelRow = styled.div`
    display: flex;
    align-items: center;
    height: 69px;
    line-height: 69px;
    padding: 0 1px 0 4px;
`

const BookName = styled.span`
    width: 98px;
    font-size: 42.5px;
    font-weight: 400;
    color: ${p => p.$c || GREY};
`

const BookPrice = styled.div`
    color: ${p => p.$c || GREEN};
    margin-right: auto;
`

const Rule = styled.div`
    height: 1px;
    background: #ebebeb;
`

const DetailHead = styled.div`
    height: 66px;
    line-height: 60px;
    margin: 6px 0 -7px;
    background: #f3f3f3;
    display: flex;
    align-items: center;
    justify-content: center;
    gap: 25px;
    padding-right: 4px;
    font-size: 42px;
    font-weight: 400;
    color: ${GREY};
`

const Tick = styled.div`
    display: flex;
    height: 67px;
    line-height: 70px;
    font-size: 40.5px;
    padding: 0 2px 0 4px;
`

const TickPrice = styled.div`
    color: ${GREEN};
    margin: 0 auto 0 17px;
`

const Sections = styled.nav`
    display: flex;
    height: 63px;
    padding-left: 46px;
    overflow: hidden;
    flex: none;
`

const Section = styled.div`
    width: ${p => p.$w ? p.$w + 'px' : 'auto'};
    font-size: ${p => p.$on ? 48 : 43}px;
    font-weight: ${p => p.$on ? 700 : 400};
    color: ${p => p.$on ? INK : GREY};
    line-height: 122px;
    flex: none;
`

const Dock = styled.footer`
    position: relative;
    display: grid;
    grid-template-columns: 248px repeat(4, 208px);
    height: 197px;
    background: #262626;
    color: #d0d0d0;
    flex: none;
`

const Sector = styled.div`
    display: flex;
    flex-direction: column;
    align-items: center;
    padding-top: 12px;
`

const SectorName = styled.div`
    margin-top: 10px;
    font-size: 33.5px;
    line-height: 50px;
    word-spacing: -3px;
    color: #9c8f80;
`

const SectorPct = styled.div`
    margin-top: 10px;
    font-size: 38px;
    line-height: 48px;
    color: #e0392b;
`

const Action = styled.div`
    display: flex;
    flex-direction: column;
    align-items: center;
    padding-top: 21px;
    font-size: 33.5px;
    line-height: 52px;
`

const HomeBar = styled.div`
    position: absolute;
    left: 326px;
    bottom: 17px;
    width: 428px;
    height: 11px;
    border-radius: 6px;
    background: #b4b4b4;
`

export default App
